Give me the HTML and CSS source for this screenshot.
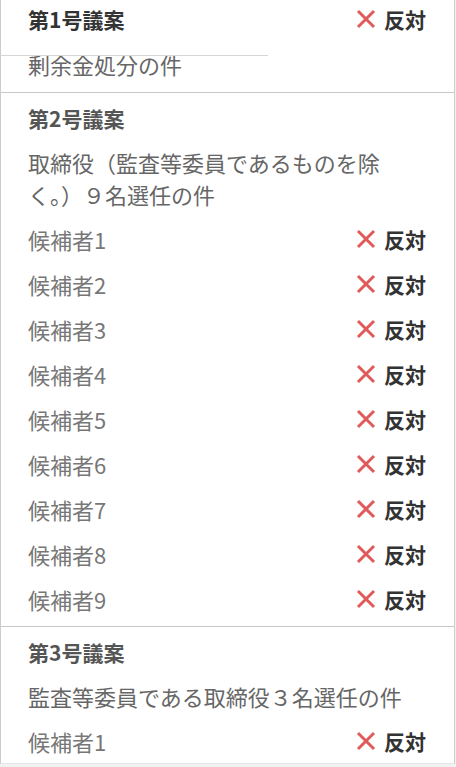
FILE: index.html
```html
<!DOCTYPE html>
<html lang="ja">
<head>
    <meta charset="UTF-8">
    <meta name="viewport" content="width=device-width, initial-scale=1.0">
    <title>議決権行使内容の確認</title>
    <link rel="stylesheet" href="styles.css">
</head>
<body>
    <div class="vote-list">
        <section class="agenda agenda-first">
            <div class="agenda-row">
                <h2 class="agenda-title">第1号議案</h2>
                <span class="vote vote-against">
                    <svg class="vote-icon" viewBox="0 0 20 20"><path d="M2 2 L18 18 M18 2 L2 18"/></svg>反対
                </span>
            </div>
            <p class="agenda-desc">剰余金処分の件</p>
            <div class="ghost-line"></div>
        </section>

        <section class="agenda">
            <h2 class="agenda-title">第2号議案</h2>
            <p class="agenda-desc">取締役（監査等委員であるものを除く。）９名選任の件</p>
            <ul class="candidates">
                <li class="candidate"><span>候補者1</span><span class="vote vote-against"><svg class="vote-icon" viewBox="0 0 20 20"><path d="M2 2 L18 18 M18 2 L2 18"/></svg>反対</span></li>
                <li class="candidate"><span>候補者2</span><span class="vote vote-against"><svg class="vote-icon" viewBox="0 0 20 20"><path d="M2 2 L18 18 M18 2 L2 18"/></svg>反対</span></li>
                <li class="candidate"><span>候補者3</span><span class="vote vote-against"><svg class="vote-icon" viewBox="0 0 20 20"><path d="M2 2 L18 18 M18 2 L2 18"/></svg>反対</span></li>
                <li class="candidate"><span>候補者4</span><span class="vote vote-against"><svg class="vote-icon" viewBox="0 0 20 20"><path d="M2 2 L18 18 M18 2 L2 18"/></svg>反対</span></li>
                <li class="candidate"><span>候補者5</span><span class="vote vote-against"><svg class="vote-icon" viewBox="0 0 20 20"><path d="M2 2 L18 18 M18 2 L2 18"/></svg>反対</span></li>
                <li class="candidate"><span>候補者6</span><span class="vote vote-against"><svg class="vote-icon" viewBox="0 0 20 20"><path d="M2 2 L18 18 M18 2 L2 18"/></svg>反対</span></li>
                <li class="candidate"><span>候補者7</span><span class="vote vote-against"><svg class="vote-icon" viewBox="0 0 20 20"><path d="M2 2 L18 18 M18 2 L2 18"/></svg>反対</span></li>
                <li class="candidate"><span>候補者8</span><span class="vote vote-against"><svg class="vote-icon" viewBox="0 0 20 20"><path d="M2 2 L18 18 M18 2 L2 18"/></svg>反対</span></li>
                <li class="candidate"><span>候補者9</span><span class="vote vote-against"><svg class="vote-icon" viewBox="0 0 20 20"><path d="M2 2 L18 18 M18 2 L2 18"/></svg>反対</span></li>
            </ul>
        </section>

        <section class="agenda agenda-last">
            <h2 class="agenda-title">第3号議案</h2>
            <p class="agenda-desc">監査等委員である取締役３名選任の件</p>
            <ul class="candidates">
                <li class="candidate"><span>候補者1</span><span class="vote vote-against"><svg class="vote-icon" viewBox="0 0 20 20"><path d="M2 2 L18 18 M18 2 L2 18"/></svg>反対</span></li>
            </ul>
        </section>
    </div>
</body>
</html>
```

FILE: styles.css
```css
* {
    margin: 0;
    padding: 0;
    box-sizing: border-box;
}

body {
    font-family: "Noto Sans CJK JP", "Noto Sans", sans-serif;
    background: #f2f2f2;
    color: #333;
    height: 767px;
    overflow: hidden;
}

.vote-list {
    width: 455px;
    background: #fff;
    border-left: 1px solid #ccc;
    border-right: 1px solid #ccc;
    border-bottom: 1px solid #e6e6e6;
}

.agenda {
    padding: 3px 28px 5px 27px;
    border-bottom: 1px solid #c8c8c8;
}

.agenda-first {
    position: relative;
    padding-top: 0;
    padding-bottom: 12px;
}

.agenda-last {
    border-bottom: none;
    padding-bottom: 0;
}

.agenda-row {
    display: flex;
    justify-content: space-between;
    align-items: center;
}

.agenda-title {
    font-size: 21px;
    font-weight: 700;
    line-height: 44px;
    color: #555;
}

.agenda-first .agenda-title {
    line-height: 38px;
    color: #333;
}

.agenda-desc {
    font-size: 22px;
    line-height: 32px;
    color: #666;
    margin-top: 6px;
    margin-bottom: 6px;
    padding-right: 10px;
}

.agenda-first .agenda-desc {
    margin-top: 10px;
    margin-bottom: 0;
}

/* leftover line drawn over the first block */
.ghost-line {
    position: absolute;
    left: -1px;
    top: 55px;
    width: 268px;
    height: 1px;
    background: #d6d6d6;
}

.candidates {
    list-style: none;
}

.candidate {
    display: flex;
    justify-content: space-between;
    align-items: center;
    height: 45px;
    font-size: 22px;
    color: #777;
}

.vote {
    display: flex;
    align-items: center;
    font-size: 21px;
    font-weight: 700;
    color: #333;
}

.vote-icon {
    width: 20px;
    height: 20px;
    margin-right: 8px;
    fill: none;
    stroke: #e05a5a;
    stroke-width: 3;
}
```
